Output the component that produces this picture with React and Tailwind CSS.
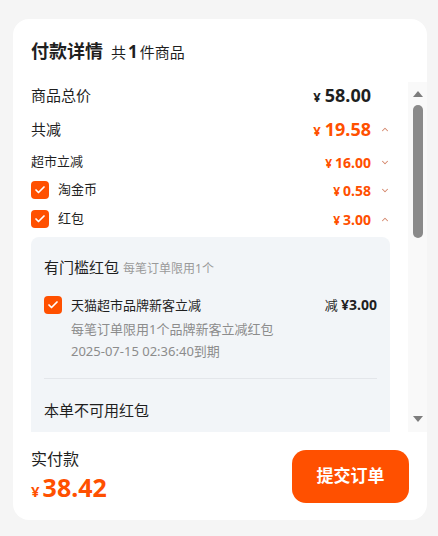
import React from 'react';
import { Check, ChevronUp, ChevronDown } from 'lucide-react';

const FONT = { fontFamily: '"Noto Sans", "Noto Sans CJK SC", sans-serif' };

const Checkbox = ({ className = '' }) => (
  <span className={`flex items-center justify-center w-[18px] h-[18px] rounded-[4px] bg-[#ff5000] shrink-0 ${className}`}>
    <Check className="w-[12px] h-[12px] text-white" strokeWidth={3.5} />
  </span>
);

const Price = ({ value, big, orange }) => (
  <span className={`flex items-baseline font-bold ${orange ? 'text-[#ff5000]' : 'text-[#1f1f1f]'}`}>
    <span className={big ? 'text-[13px] mr-[4px]' : 'text-[12px] mr-[3px]'}>¥</span>
    <span className={big ? 'text-[18px]' : 'text-[14px]'}>{value}</span>
  </span>
);

const Row = ({ label, labelClass, check, value, big, orange, caret, className }) => (
  <div className={`flex items-center ${className}`}>
    {check && <Checkbox className="mr-[9px]" />}
    <span className={`flex-1 text-[#1f1f1f] ${labelClass}`}>{label}</span>
    <Price value={value} big={big} orange={orange} />
    <span className="w-[10px] ml-[9px] flex justify-center">
      {caret === 'up' && <ChevronUp className="w-[11px] h-[11px] text-[#d4866a]" strokeWidth={2.5} />}
      {caret === 'down' && <ChevronDown className="w-[11px] h-[11px] text-[#d4866a]" strokeWidth={2.5} />}
    </span>
  </div>
);

export default function App() {
  return (
    <div className="min-h-screen bg-[#f5f5f5] pt-[19px]" style={FONT}>
      <div className="ml-[13px] w-[414px] h-[501px] bg-white rounded-[16px] flex flex-col overflow-hidden">
        <div className="h-[63px] pl-[18px] pt-[19px] flex items-baseline">
          <span className="text-[18px] font-bold text-[#1f1f1f]">付款详情</span>
          <span className="ml-[8px] text-[15px] text-[#1f1f1f]">
            共<span className="font-bold text-[17px] mx-[2px]">1</span>件商品
          </span>
        </div>

        <div className="flex h-[350px]">
          <div className="flex-1 pl-[18px] pr-[18px] overflow-hidden">
            <Row label="商品总价" labelClass="text-[15px]" value="58.00" big className="h-[26px]" />
            <Row label="共减" labelClass="text-[15px]" value="19.58" big orange caret="up" className="h-[26px] mt-[8px]" />
            <Row label="超市立减" labelClass="text-[13px]" value="16.00" orange caret="down" className="h-[24px] mt-[8px]" />
            <Row label="淘金币" labelClass="text-[13px]" check value="0.58" orange caret="down" className="h-[24px] mt-[4px]" />
            <Row label="红包" labelClass="text-[13px]" check value="3.00" orange caret="up" className="h-[24px] mt-[5px]" />

            <div className="mt-[6px] bg-[#f2f5f8] rounded-[8px] px-[13px] pt-[19px] pb-[40px]">
              <div className="flex items-baseline leading-[22px]">
                <span className="text-[15px] text-[#1f1f1f]">有门槛红包</span>
                <span className="ml-[4px] text-[12px] text-[#9a9a9a]">每笔订单限用1个</span>
              </div>
              <div className="mt-[14px] flex">
                <Checkbox className="mt-[2px]" />
                <div className="flex-1 ml-[9px]">
                  <div className="flex items-center justify-between leading-[22px]">
                    <span className="text-[13px] text-[#1f1f1f]">天猫超市品牌新客立减</span>
                    <span className="text-[13px] text-[#1f1f1f]">
                      减 <span className="font-bold text-[14px]">¥3.00</span>
                    </span>
                  </div>
                  <div className="mt-[2px] text-[13px] leading-[22px] text-[#8c8c8c]">每笔订单限用1个品牌新客立减红包</div>
                  <div className="text-[13px] leading-[22px] text-[#8c8c8c]">2025-07-15 02:36:40到期</div>
                </div>
              </div>
              <div className="mt-[16px] h-px bg-[#e3e6ea]" />
              <div className="mt-[20px] text-[15px] leading-[22px] text-[#1f1f1f]">本单不可用红包</div>
            </div>
          </div>

          <div className="w-[19px] bg-[#f9f9f9] flex flex-col items-center pt-[9px] pb-[10px]">
            <span className="w-0 h-0 border-l-[5px] border-r-[5px] border-b-[6px] border-l-transparent border-r-transparent border-b-[#7d7d7d]" />
            <span className="mt-[8px] w-[10px] h-[133px] rounded-full bg-[#8a8a8a]" />
            <span className="mt-auto w-0 h-0 border-l-[5px] border-r-[5px] border-t-[6px] border-l-transparent border-r-transparent border-t-[#7d7d7d]" />
          </div>
        </div>

        <div className="flex-1 flex items-center justify-between pl-[18px] pr-[18px]">
          <div className="flex flex-col">
            <span className="block text-[16px] leading-[26px] text-[#1f1f1f]">实付款</span>
            <span className="flex items-baseline font-bold text-[#ff5000] leading-[30px]">
              <span className="text-[15px] mr-[3px]">¥</span>
              <span className="text-[25px]">38.42</span>
            </span>
          </div>
          <button className="w-[117px] h-[53px] rounded-[14px] bg-[#ff5000] text-white text-[17px] font-bold">
            提交订单
          </button>
        </div>
      </div>
    </div>
  );
}
